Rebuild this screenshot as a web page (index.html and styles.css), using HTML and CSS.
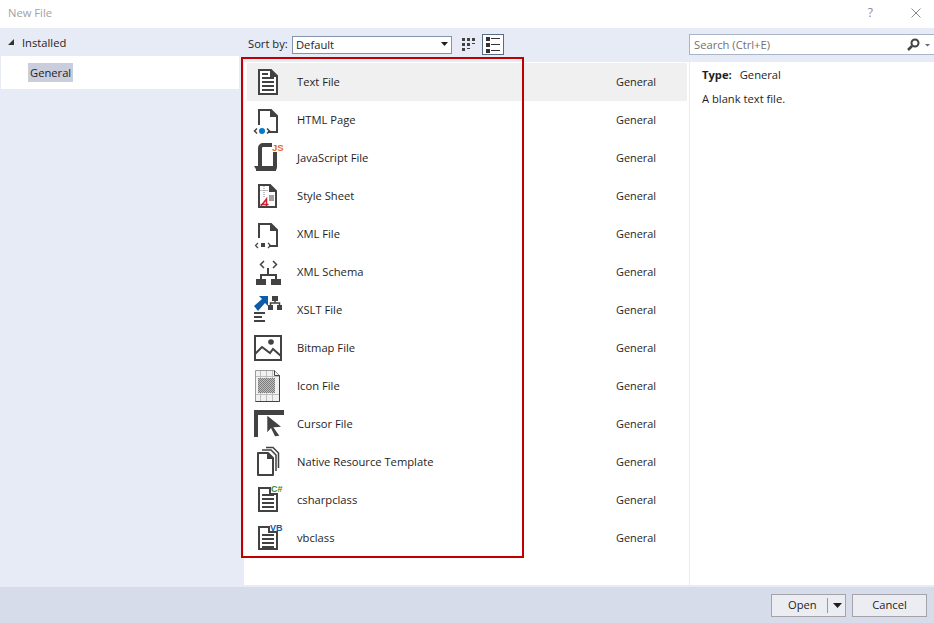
FILE: index.html
```html
<!DOCTYPE html>
<html lang="en">
<head>
<meta charset="utf-8">
<title>New File</title>
<link rel="stylesheet" href="styles.css">
</head>
<body>
<div class="dialog">
  <header class="titlebar">
    <span class="title">New File</span>
    <span class="help">?</span>
    <svg class="close" width="10" height="10" viewBox="0 0 10 10"><path d="M.5.5l9 9M9.500.5l-9 9" stroke="#8a8a8a" fill="none"/></svg>
  </header>
  <main class="body">
    <nav class="side">
      <div class="installed"><svg width="8" height="8" viewBox="0 0 8 8"><path d="M7 1v6H1z" fill="#333"/></svg><span>Installed</span></div>
      <div class="side-item"><span class="chip">General</span></div>
    </nav>
    <section class="center">
      <div class="toolbar">
        <span class="sort-label">Sort by:</span>
        <div class="select"><span>Default</span><svg width="7" height="4" viewBox="0 0 7 4"><path d="M0 0h7L3.500 4z" fill="#1e1e1e"/></svg></div>
        <svg class="view" width="20" height="20" viewBox="0 0 20 20"><path d="M3 3h3v3H3zM8 3h3v3H8zM13 3h3v3h-3zM3 8h3v3H3zM8 8h3v3H8zM13 8h3v1h-3zM3 13h3v3H3zM8 13h3v1H8z" fill="#424242"/></svg>
        <div class="view-on"><svg width="20" height="19" viewBox="0 0 20 19"><path d="M3 2h4v4H3zM3 8h4v4H3zM3 14h4v4H3z" fill="#333"/><path d="M8 3h9v1H8zM8 9h9v1H8zM8 15h9v1H8z" fill="#333"/></svg></div>
      </div>
      <div class="list">
        <div class="row row-on">
          <svg class="ico" width="32" height="32" viewBox="0 0 32 32"><path d="M7 4h12l6 6v18H7z" fill="#fff" stroke="#424242" stroke-width="2"/><path d="M18 3v8h8z" fill="#424242"/><path d="M10 8h6M10 12h12M10 16h12M10 20h12M10 24h12" stroke="#424242" stroke-width="2"/></svg>
          <span class="name">Text File</span><span class="type">General</span>
        </div>
        <div class="row">
          <svg class="ico" width="32" height="32" viewBox="0 0 32 32"><path d="M7 21V6h12l6 6v16h-9" fill="#fff" stroke="#424242" stroke-width="2"/><path d="M18 5v8h8z" fill="#424242"/><circle cx="10" cy="27" r="3" fill="#007acc"/><path d="M5 24.500L2.500 27 5 29.500M15 24.500L17.500 27 15 29.500" fill="none" stroke="#424242" stroke-width="1.500"/></svg>
          <span class="name">HTML Page</span><span class="type">General</span>
        </div>
        <div class="row">
          <svg class="ico" width="32" height="32" viewBox="0 0 32 32"><path d="M8 25V6a3 3 0 0 1 3-3h9" fill="none" stroke="#424242" stroke-width="4"/><path d="M23 10v15a2 2 0 0 1-2 2H4" fill="none" stroke="#424242" stroke-width="4"/><path d="M2 24h22v5H5z" fill="#424242"/><text x="20" y="8.500" class="js">JS</text></svg>
          <span class="name">JavaScript File</span><span class="type">General</span>
        </div>
        <div class="row">
          <svg class="ico" width="32" height="32" viewBox="0 0 32 32"><path d="M7 5h11l6 6v16H7z" fill="#fff" stroke="#424242" stroke-width="2"/><path d="M17 4v8h8z" fill="#424242"/><path d="M12 6v11M8.500 10.500h8" stroke="#888" stroke-dasharray="1 1"/><path d="M17 16h5M17 18h5M17 20h5" stroke="#424242"/><path d="M9 26l5.500-7v7M8.500 24.500h8" fill="none" stroke="#d0202c" stroke-width="1.500"/></svg>
          <span class="name">Style Sheet</span><span class="type">General</span>
        </div>
        <div class="row">
          <svg class="ico" width="32" height="32" viewBox="0 0 32 32"><path d="M7 20V6h12l6 6v16h-8" fill="#fff" stroke="#424242" stroke-width="2"/><path d="M18 5v8h8z" fill="#424242"/><path d="M9 25h4v4H9z" fill="#424242"/><path d="M6 25l-2.500 2.500L6 30M16 25l2.500 2.500L16 30" fill="none" stroke="#424242" stroke-width="1.200"/></svg>
          <span class="name">XML File</span><span class="type">General</span>
        </div>
        <div class="row">
          <svg class="ico" width="32" height="32" viewBox="0 0 32 32"><path d="M12 5L8.500 8.500 12 12M21 5l3.500 3.500L21 12" fill="none" stroke="#424242" stroke-width="1.500"/><path d="M16 12v7M9 24v-5h15v5" fill="none" stroke="#424242" stroke-width="2"/><path d="M4 23h10v6H4zM19 23h10v6H19z" fill="#424242"/></svg>
          <span class="name">XML Schema</span><span class="type">General</span>
        </div>
        <div class="row">
          <svg class="ico" width="32" height="32" viewBox="0 0 32 32"><path d="M2 12l8-7-3-3h9v10l-3-3-7 8z" fill="#0e5ca8"/><path d="M20 2h6v5h-6zM16 11h5v5h-5zM25 11h5v5h-5z" fill="#424242"/><path d="M23 7v2M18.500 11V9h9v2" stroke="#424242" fill="none" stroke-width="1.500"/><path d="M2 19h11M2 23h8M2 27h11" stroke="#424242" stroke-width="1.800"/></svg>
          <span class="name">XSLT File</span><span class="type">General</span>
        </div>
        <div class="row">
          <svg class="ico" width="32" height="32" viewBox="0 0 32 32"><path d="M3 4h26v24H3z" fill="#fff" stroke="#424242" stroke-width="2"/><circle cx="19" cy="10" r="2.800" fill="#424242"/><path d="M3 22l7-7 8 6 3-4 8 7" fill="none" stroke="#424242" stroke-width="2"/></svg>
          <span class="name">Bitmap File</span><span class="type">General</span>
        </div>
        <div class="row">
          <svg class="ico" width="32" height="32" viewBox="0 0 32 32"><defs><pattern id="chk" width="2" height="2" patternUnits="userSpaceOnUse"><rect width="2" height="2" fill="#bdbdbd"/><rect width="1" height="1" fill="#7c7c7c"/><rect x="1" y="1" width="1" height="1" fill="#7c7c7c"/></pattern></defs><path d="M3.500.5h19l5 5v26h-24z" fill="#f1f1f1" stroke="#9a9a9a"/><path d="M6 8h17v15H6z" fill="url(#chk)"/><path d="M8.500 1v7M14.500 1v7M20.500 1v7M8.500 23v8M14.500 23v8M20.500 23v8M4 6.500h23M4 24.500h23" stroke="#bdbdbd"/><path d="M22.500.5v5h5M27.500 5.500v26h-24" fill="none" stroke="#424242"/></svg>
          <span class="name">Icon File</span><span class="type">General</span>
        </div>
        <div class="row">
          <svg class="ico" width="32" height="32" viewBox="0 0 32 32"><path d="M2 2h30v5H6v22H2z" fill="#424242"/><path d="M15.300 7.700L29 18.700l-7.700.6 6 8.400-4.300.6-4-8.300-3.700 4.300z" fill="#424242"/></svg>
          <span class="name">Cursor File</span><span class="type">General</span>
        </div>
        <div class="row">
          <svg class="ico" width="32" height="32" viewBox="0 0 32 32"><path d="M6 7h10l5 5v17H6z" fill="#fff" stroke="#424242" stroke-width="2" stroke-linejoin="round"/><path d="M15 6v7h7z" fill="#424242"/><path d="M10 4h9l5 5v16" fill="none" stroke="#424242" stroke-width="1.500"/><path d="M14 1.500h7l5.500 5.500v15" fill="none" stroke="#424242" stroke-width="1.500"/></svg>
          <span class="name">Native Resource Template</span><span class="type">General</span>
        </div>
        <div class="row">
          <svg class="ico" width="32" height="32" viewBox="0 0 32 32"><path d="M7 4h11v6h7v17H7z" fill="#fff" stroke="#424242" stroke-width="2"/><path d="M10 11h12M10 15h12M10 19h12M10 23h12" stroke="#424242" stroke-width="2"/><text x="19" y="8" class="cs">C#</text></svg>
          <span class="name">csharpclass</span><span class="type">General</span>
        </div>
        <div class="row">
          <svg class="ico" width="32" height="32" viewBox="0 0 32 32"><path d="M7 5h10v5h8v17H7z" fill="#fff" stroke="#424242" stroke-width="2"/><path d="M10 13h12M10 17h12M10 21h12M10 25h12" stroke="#424242" stroke-width="2"/><text x="18" y="9" class="vb">VB</text></svg>
          <span class="name">vbclass</span><span class="type">General</span>
        </div>
      </div>
      <div class="highlight"></div>
    </section>
    <aside class="right">
      <div class="search"><span>Search (Ctrl+E)</span><svg width="24" height="14" viewBox="0 0 24 14"><circle cx="9" cy="5" r="3.500" fill="none" stroke="#424242" stroke-width="2"/><path d="M6 8l-4 4" stroke="#424242" stroke-width="2.500"/><path d="M19 6h5l-2.500 2.500z" fill="#666"/></svg></div>
      <div class="detail">
        <p class="type-line"><b>Type:</b><span>General</span></p>
        <p class="desc">A blank text file.</p>
      </div>
    </aside>
  </main>
  <footer class="footer">
    <div class="btn-split"><span class="open">Open</span><i class="sep"></i><svg width="9" height="5" viewBox="0 0 9 5"><path d="M0 0h9L4.500 5z" fill="#1e1e1e"/></svg></div>
    <button class="btn">Cancel</button>
  </footer>
</div>
</body>
</html>
```
FILE: styles.css
```css
* { box-sizing: border-box; }
html, body { margin: 0; padding: 0; }
body {
  width: 934px;
  height: 623px;
  overflow: hidden;
  font-family: "Open Sans", "Noto Sans", sans-serif;
  font-size: 11.2px;
  color: #1e1e1e;
  background: #fff;
}
.dialog { display: flex; flex-direction: column; height: 623px; }
.titlebar {
  height: 28px;
  flex: none;
  display: flex;
  align-items: center;
  padding: 0 13px 3px 8px;
  background: #fff;
}
.title { flex: 1; color: #a2a2a2; }
.help { color: #8a8a8a; margin-right: 38px; font-size: 12px; }
.body { flex: 1; display: flex; min-height: 0; background: #e6ebf5; }
.side { width: 244px; flex: none; }
.installed { height: 28px; display: flex; align-items: center; gap: 7px; padding: 0 0 0 7px; }
.side-item { height: 33px; margin-left: 1px; margin-right: 5px; background: #fff; padding: 7px 0 0 27px; display: flex; align-items: flex-start; }
.chip { background: #c9cddc; height: 19px; padding: 0 2px; line-height: 19px; }
.center { width: 446px; flex: none; display: flex; flex-direction: column; position: relative; }
.toolbar { height: 34px; flex: none; display: flex; align-items: flex-start; padding: 6px 0 0 4px; }
.sort-label { width: 44px; flex: none; line-height: 20px; white-space: nowrap; }
.select {
  width: 160px; height: 18px; margin-top: 2px;
  background: #fff; border: 1px solid #8592ac;
  display: flex; align-items: center; justify-content: space-between;
  padding: 0 3px 2px 3px; margin-right: 7px;
}
.view { margin-top: 1px; margin-right: 3px; }
.view-on { width: 22px; height: 21px; border: 1px solid #5a6b85; background: #fff; }
.view-on svg { display: block; }
.list { flex: 1; background: #fff; padding: 1px 2px 0 3px; border-right: 1px solid #e6ebf5; }
.row { height: 38px; display: flex; align-items: center; }
.row-on { background: #f0f0f0; }
.ico { margin-left: 5px; flex: none; }
.name { margin-left: 13px; flex: 1; padding-bottom: 2px; }
.type { width: 71px; flex: none; padding-bottom: 2px; font-size: 10.9px; }
.js { font: bold 9.5px "Liberation Sans", sans-serif; fill: #e8681e; }
.cs { font: bold 9px "Liberation Sans", sans-serif; fill: #388a34; }
.vb { font: bold 9px "Liberation Sans", sans-serif; fill: #0e5ca8; }
.highlight { position: absolute; left: -3px; top: 29px; width: 283px; height: 501px; border: 2px solid #c00000; }
.right { flex: 1; display: flex; flex-direction: column; }
.search {
  height: 21px; flex: none; margin: 6px 0 7px -1px;
  background: #fff; border: 1px solid #a9b4c8; border-right: none;
  display: flex; align-items: center; justify-content: space-between;
  padding: 0 4px 0 4px; color: #707070;
}
.detail { flex: 1; background: #fff; padding: 5px 12px; }
.detail p { margin: 0; line-height: 16px; }
.detail .type-line { margin-bottom: 8px; }
.type-line b { margin-right: 8px; font-weight: 700; }
.footer {
  height: 38px; flex: none;
  background: #d6dce9; border-top: 2px solid #e6ebf5;
  display: flex; align-items: center; justify-content: flex-end;
  gap: 6px; padding: 1px 7px 0 0;
}
.btn-split, .btn {
  height: 23px; background: #ecedf2; border: 1px solid #a3a3a9;
  font: inherit; color: #1e1e1e;
}
.btn-split { width: 75px; display: flex; align-items: center; }
.open { width: 55px; padding: 0 0 2px 16px; }
.sep { width: 1px; height: 15px; background: #9a9aa0; margin-right: 5px; }
.btn { width: 75px; padding: 0 0 2px; }
```
